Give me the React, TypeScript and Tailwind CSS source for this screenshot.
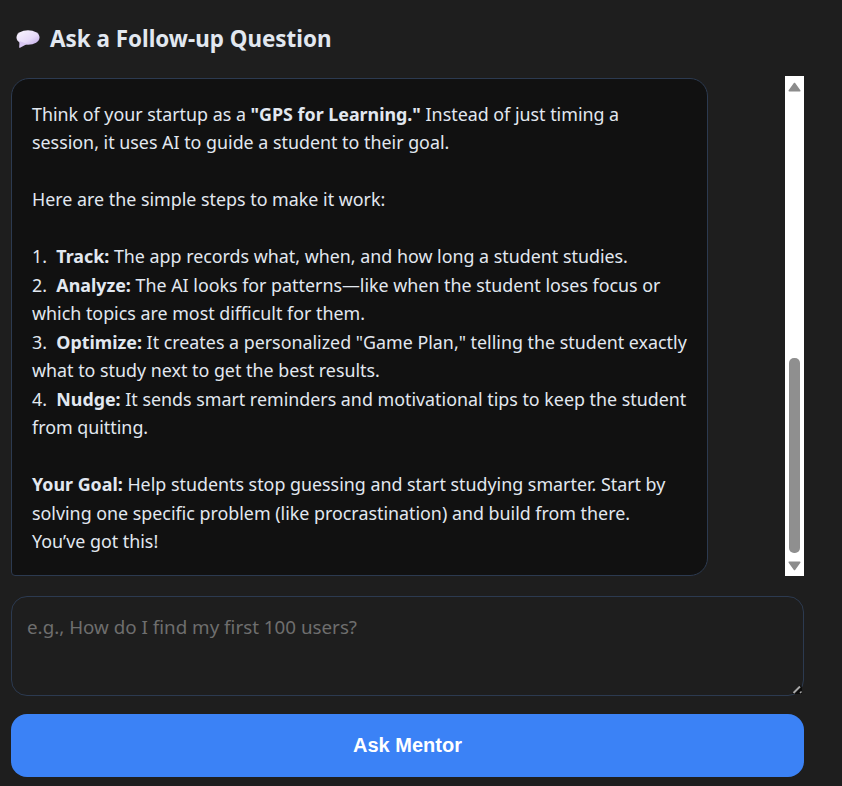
function Scrollbar() {
  return (
    <div className="w-[19px] h-[500px] bg-white flex flex-col items-center shrink-0">
      <svg width="13" height="10" viewBox="0 0 13 10" className="mt-[6px] shrink-0">
        <path d="M6.5 1.5 L11.7 8.8 L1.3 8.8 Z" fill="#8c8c8c" stroke="#8c8c8c" strokeWidth="1.6" strokeLinejoin="round" />
      </svg>
      <div className="flex-1 w-full flex flex-col justify-end items-center">
        <div className="w-[11px] h-[195px] rounded-[5px] bg-[#8f8f8f]" />
      </div>
      <svg width="13" height="10" viewBox="0 0 13 10" className="mt-[8px] mb-[5px] shrink-0">
        <path d="M1.3 1.2 L11.7 1.2 L6.5 8.5 Z" fill="#8c8c8c" stroke="#8c8c8c" strokeWidth="1.6" strokeLinejoin="round" />
      </svg>
    </div>
  );
}

export default function App() {
  return (
    <div className="w-[842px] h-[786px] overflow-hidden bg-[#1e1e1e] px-[11px] font-['Noto_Sans',sans-serif]">
      <div className="flex items-center gap-[10px] pt-[24px] pl-[5px] h-[76px] pb-[22px]">
        <svg width="24" height="18" viewBox="0 0 24 18" className="shrink-0">
          <defs>
            <linearGradient id="b" x1="0" y1="0" x2="1" y2="1">
              <stop offset="0" stopColor="#faf6ff" />
              <stop offset="0.6" stopColor="#e6daf8" />
              <stop offset="1" stopColor="#bfa6e6" />
            </linearGradient>
          </defs>
          <ellipse cx="12" cy="7.5" rx="11.5" ry="7.3" fill="url(#b)" />
          <path d="M3.5 11 L3.2 17.4 Q3.4 17.9 4.5 17.4 L11 14 Z" fill="#d8c6f2" />
        </svg>
        <h2 className="text-[22.4px] leading-[30px] font-bold text-[#e2e8f0]">Ask a Follow-up Question</h2>
      </div>
      <div className="flex justify-between items-start w-[793px]">
        <div className="mt-[2px] w-[697px] h-[498px] rounded-[18px] rounded-bl-[4px] border border-[#2c3a50] bg-[#111111] pl-[20px] pr-[19px] pt-[21px] text-[17.85px] leading-[28.48px] text-[#e2e8f0]">
          <p>Think of your startup as a <strong>"GPS for Learning."</strong> Instead of just timing a session, it uses AI to guide a student to their goal.</p>
          <p className="mt-[28.48px]">Here are the simple steps to make it work:</p>
          <ol className="mt-[28.48px]">
            <li>1.&nbsp; <strong>Track:</strong> The app records what, when, and how long a student studies.</li>
            <li>2.&nbsp; <strong>Analyze:</strong> The AI looks for patterns—like when the student loses focus or which topics are most difficult for them.</li>
            <li>3.&nbsp; <strong>Optimize:</strong> It creates a personalized "Game Plan," telling the student exactly what to study next to get the best results.</li>
            <li>4.&nbsp; <strong>Nudge:</strong> It sends smart reminders and motivational tips to keep the student from quitting.</li>
          </ol>
          <p className="mt-[28.48px]"><strong>Your Goal:</strong> Help students stop guessing and start studying smarter. Start by solving one specific problem (like procrastination) and build from there.<br />You’ve got this!</p>
        </div>
        <Scrollbar />
      </div>
      <div className="relative mt-[20px] w-[793px] h-[100px]">
        <textarea
          placeholder="e.g., How do I find my first 100 users?"
          className="block w-full h-full resize-none rounded-[16px] border border-[#2c3a50] bg-[#1e1e1e] px-[15px] pt-[16px] pb-[14px] text-[18.8px] leading-[28px] text-[#e2e8f0] placeholder:text-[#6e6e6e] outline-none"
        />
        <svg width="10" height="10" viewBox="0 0 10 10" className="absolute right-[2px] bottom-[2px] pointer-events-none">
          <path d="M0 10 L8 1 L10 3 L10 10 Z" fill="#0c0c0c" />
          <path d="M1.5 9 L8 2.5" stroke="#a8a8a8" strokeWidth="2" />
          <path d="M8 9 L9.5 7.5" stroke="#a8a8a8" strokeWidth="1.4" />
        </svg>
      </div>
      <button className="mt-[18px] block w-[793px] h-[63px] pb-[2px] rounded-[16px] bg-[#3b82f6] text-white text-[20px] font-bold font-['Liberation_Sans',sans-serif]">Ask Mentor</button>
    </div>
  );
}
